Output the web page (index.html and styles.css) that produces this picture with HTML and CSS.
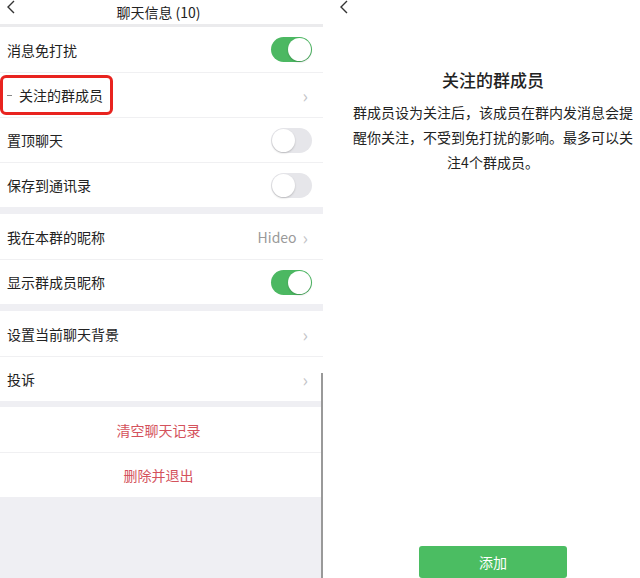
FILE: index.html
```html
<!DOCTYPE html>
<html>
<head>
    <meta charset="utf-8">
    <link rel="stylesheet" href="styles.css">
</head>
<body>
    <div class="screen">
        <div class="panel chat-info">
            <div class="header">
                <svg class="back" width="10" height="14" viewBox="0 0 10 14"><path d="M8 1 L2 7 L8 13" fill="none" stroke="#333" stroke-width="1.4"/></svg>
                <span class="title">聊天信息 (10)</span>
            </div>

            <div class="group first">
                <div class="row"><span>消息免打扰</span><span class="switch on"></span></div>
                <div class="row highlighted">
                    <span class="dash"></span><span>关注的群成员</span>
                    <span class="mark"></span>
                    <span class="chevron">›</span>
                </div>
                <div class="row"><span>置顶聊天</span><span class="switch"></span></div>
                <div class="row"><span>保存到通讯录</span><span class="switch"></span></div>
            </div>

            <div class="group">
                <div class="row"><span>我在本群的昵称</span><span class="value">Hideo <span class="chevron">›</span></span></div>
                <div class="row"><span>显示群成员昵称</span><span class="switch on"></span></div>
            </div>

            <div class="group">
                <div class="row"><span>设置当前聊天背景</span><span class="chevron">›</span></div>
                <div class="row"><span>投诉</span><span class="chevron">›</span></div>
            </div>

            <div class="group last">
                <div class="row danger">清空聊天记录</div>
                <div class="row danger">删除并退出</div>
            </div>

            <div class="scrollbar"></div>
        </div>

        <div class="panel follow">
            <svg class="back" width="10" height="14" viewBox="0 0 10 14"><path d="M8 1 L2 7 L8 13" fill="none" stroke="#333" stroke-width="1.4"/></svg>
            <h2>关注的群成员</h2>
            <p>群成员设为关注后，该成员在群内发消息会提醒你关注，不受到免打扰的影响。最多可以关注4个群成员。</p>
            <div class="spacer"></div>
            <button class="add">添加</button>
        </div>
    </div>
</body>
</html>
```

FILE: styles.css
```css
body {
    margin: 0;
    font-family: "Noto Sans CJK SC", "Noto Sans", sans-serif;
    color: #222;
}
.screen {
    display: flex;
    width: 640px;
    height: 578px;
    overflow: hidden;
}
.panel {
    position: relative;
    height: 578px;
}
.chat-info {
    width: 326px;
    background: #efeff3;
}
.header {
    position: relative;
    height: 24px;
    background: #fff;
    display: flex;
    align-items: center;
    justify-content: center;
    padding-right: 6px;
    border-bottom: 3px solid #ebebed;
}
.header .title {
    font-size: 14px;
    line-height: 18px;
}
.back {
    position: absolute;
    top: 0;
    left: 6px;
}
.group {
    background: #fff;
    margin-top: 7px;
}
.group.first {
    margin-top: 0;
}
.group.last {
    margin-top: 6px;
}
.row {
    position: relative;
    height: 45px;
    box-sizing: border-box;
    display: flex;
    align-items: center;
    justify-content: space-between;
    padding: 0 12px 0 7px;
    font-size: 14px;
}
.row + .row {
    border-top: 1px solid #f0f0f2;
}
.row.highlighted {
    justify-content: flex-start;
}
.row.highlighted .chevron {
    margin-left: auto;
}
.dash {
    width: 5px;
    height: 1px;
    background: #888;
    margin-right: 7px;
}
.mark {
    position: absolute;
    left: 0;
    top: 2px;
    width: 113px;
    height: 40px;
    box-sizing: border-box;
    border: 3px solid #e8231f;
    border-radius: 6px;
}
.chevron {
    color: #c4c4c8;
    font-size: 18px;
    line-height: 18px;
    margin-right: 3px;
}
.value {
    color: #9a9a9a;
    display: flex;
    align-items: center;
    gap: 6px;
}
.switch {
    position: relative;
    width: 41px;
    height: 25px;
    box-sizing: border-box;
    border-radius: 13px;
    background: #e6e6ea;
    margin-right: -1px;
}
.switch::after {
    content: "";
    position: absolute;
    top: 1px;
    left: 1px;
    width: 23px;
    height: 23px;
    border-radius: 50%;
    background: #fff;
    box-shadow: 0 1px 2px rgba(0, 0, 0, 0.2);
}
.switch.on {
    background: #4cb862;
}
.switch.on::after {
    left: 17px;
}
.row.danger {
    justify-content: center;
    padding: 0 6px 0 0;
    color: #d4525c;
}
.scrollbar {
    position: absolute;
    left: 321px;
    top: 373px;
    width: 2px;
    height: 205px;
    background: #999;
}
.follow {
    flex: 1;
    background: #fff;
    display: flex;
    flex-direction: column;
    align-items: center;
    padding: 0 6px 7px 29px;
}
.follow .back {
    left: 16px;
}
.follow h2 {
    margin: 68px 0 0;
    font-size: 17px;
    font-weight: 500;
    line-height: 24px;
}
.follow p {
    width: 282px;
    margin: 8px 0 0;
    font-size: 14px;
    line-height: 25px;
    text-align: center;
}
.spacer {
    flex: 1;
}
.add {
    width: 148px;
    height: 32px;
    border: none;
    border-radius: 3px;
    background: #4bbd62;
    color: #fff;
    font-family: inherit;
    font-size: 14px;
}
```
